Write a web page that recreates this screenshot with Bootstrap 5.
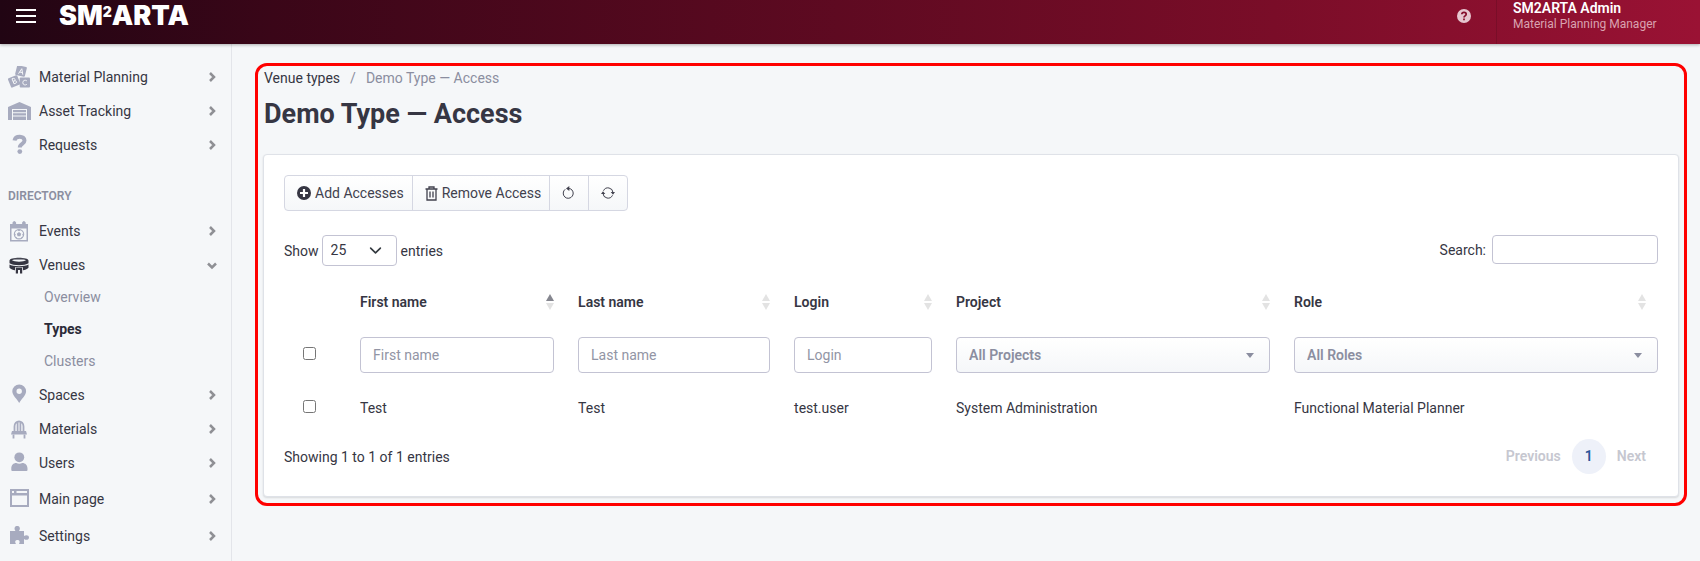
<!DOCTYPE html>
<html lang="en">
<head>
<meta charset="utf-8">
<meta name="viewport" content="width=device-width, initial-scale=1">
<title>Demo Type — Access</title>
<link href="https://cdn.jsdelivr.net/npm/bootstrap@5.3.0/dist/css/bootstrap.min.css" rel="stylesheet">
<style>
:root { --ink: #363643; --muted-ink: #8b8ea0; --icon: #a7abbf; --line: #c3c3d3; }
body { font-family: Roboto, "Noto Sans", sans-serif; font-size: 14px; line-height: 20px; color: var(--ink); background: #f5f7f9; }
a { color: inherit; text-decoration: none; }
.topbar { background: linear-gradient(90deg, #210513 0%, #3a0618 16%, #7a0d28 75%, #9a1234 100%); color: #fff; padding: 0 42px 12px 16px; height: 44px; box-shadow: 0 1px 3px rgba(0,0,0,.3); position: relative; }
.burger { width: 20px; height: 14px; border: 0; padding: 0; background: none; border-top: 2px solid #fff; border-bottom: 2px solid #fff; display: flex; align-items: center; }
.burger span { height: 2px; width: 100%; background: #fff; }
.logo { font: 900 27px/32px Inter, sans-serif; color: #fff; margin-left: 23px; display: flex; }
.logo span { font-size: 14px; line-height: 24px; }
.help { margin-right: 25px; color: #e6c6cf; border: 0; padding: 0; background: none; display: flex; }
.who { border-left: 1px solid rgba(0,0,0,.12); padding-left: 16px; width: 162px; height: 44px; margin-bottom: -12px; line-height: 16px; }
.who b { font-weight: 600; }
.who small { font-size: 12px; color: #d9a3b0; white-space: nowrap; }
.sidebar { width: 232px; border-right: 1px solid #e3e5ea; padding-top: 16px; min-height: calc(100vh - 44px); }
.side-link { height: 34px; padding: 0 14px 0 8px; }
.side-link.tall { height: 37px; }
.side-link .glyph { width: 24px; height: 22px; margin-right: 7px; color: var(--icon); }
.side-link .chev { margin-left: auto; color: #8f9095; }
.side-head { font-size: 12px; font-weight: 600; color: var(--muted-ink); padding-left: 8px; margin: 21px 0 5px; line-height: 26px; }
.side-subs { margin: -1px 0 1px; }
.side-sub { height: 32px; padding-left: 44px; color: var(--muted-ink); line-height: 32px; display: block; }
.side-sub.current { color: #2b2b38; font-weight: 700; }
.frame { border: 3px solid red; border-radius: 12px; margin: 19px 13px 0 23px; padding: 2px 5px 6px; }
.crumbs { margin: 0 0 0 1px; --bs-breadcrumb-item-padding-x: 10px; --bs-breadcrumb-divider-color: #8b8ea0; --bs-breadcrumb-item-active-color: #8b8ea0; }
h1 { font-size: 27px; line-height: 34px; font-weight: 700; margin: 9px 0 23px 1px; color: var(--ink); }
.panel { background: #fff; border: 1px solid #dfe2e8; border-radius: 4px; padding: 20px 20px 22px; box-shadow: 0 1px 2px rgba(0,0,0,.12); }
.tool { height: 36px; font-size: 14px; color: #41414e; border: 1px solid #d5d7e2; background: linear-gradient(#fff, #f5f7f9); padding: 0 12px; border-radius: 4px; gap: 4px; }
.tool-text { padding-right: 8px; }
.box { border: 1px solid var(--line); border-radius: 4px; background-color: #fff; color: var(--ink); font-size: 14px; }
.len { width: 75px; height: 31px; padding: 0 8px; margin: 0 4px 0 3px; background-position: right 14px center; background-size: 13px; }
.find { width: 166px; height: 29px; margin-left: 6px; padding: 0 8px; }
.grid-table { table-layout: fixed; width: 100%; }
.grid-table th, .grid-table td { padding: 12px 12px 13px; vertical-align: middle; font-size: 14px; }
.grid-table th { font-weight: 600; padding-top: 10px; }
.grid-table td:last-child { padding-right: 0; }
.grid-table .box { width: 100%; height: 36px; padding: 0 12px; display: block; }
.grid-table .box::placeholder { color: #9295a5; }
.grid-table .pick { font-weight: 600; color: var(--muted-ink); appearance: none; background: url("data:image/svg+xml,%3Csvg xmlns='http://www.w3.org/2000/svg' width='8' height='5'%3E%3Cpath d='M0 0h8L4 5z' fill='%238b8ea0'/%3E%3C/svg%3E") no-repeat right 15px center, linear-gradient(#fff, #f5f7f9); }
.tick { width: 13px; height: 13px; display: block; margin: 0 0 4px 7px; }
.sorter { color: #e3e3e3; }
.pager { --bs-pagination-border-width: 0; --bs-pagination-font-size: 14px; --bs-pagination-disabled-color: #c6c7d0; --bs-pagination-disabled-bg: #fff; font-weight: 600; }
.pager .page-link { line-height: 35px; padding: 0 12px; }
.pager .active .page-link { background: #eef1f9; color: #2b579a; border-radius: 50%; padding: 0 13px; }
</style>
</head>
<body>
<svg class="d-none">
  <symbol id="chev" viewBox="0 0 10 10"><path d="M3 1 7 5 3 9" fill="none" stroke="currentColor" stroke-width="2.500"/></symbol>
  <symbol id="sort" viewBox="0 0 8 16"><path d="M4 0 8 7H0z" fill="var(--up, currentColor)"/><path d="M0 9h8l-4 7z" fill="currentColor"/></symbol>
</svg>
<header class="topbar d-flex align-items-center">
  <button class="burger" type="button" aria-label="Menu"><span></span></button>
  <a class="logo" href="#">SM<span>2</span>ARTA</a>
  <button class="help ms-auto" type="button" aria-label="Help"><svg width="14" height="14" viewBox="0 0 14 14"><circle cx="7" cy="7" r="7" fill="currentColor"/><path d="M4.800 5.300C5 2.700 9.200 2.900 9.200 5.300 9.200 6.800 7 6.900 7 8.400M7 9.500v1.800" fill="none" stroke="#850e2b" stroke-width="1.700"/></svg></button>
  <div class="who d-flex flex-column"><b>SM2ARTA Admin</b><small>Material Planning Manager</small></div>
</header>
<div class="d-flex">
  <nav class="sidebar flex-shrink-0">
    <a class="side-link d-flex align-items-center" href="#"><svg class="glyph" viewBox="0 0 24 22"><g fill="currentColor"><rect x="8" y="0" width="10" height="10" rx="1" transform="rotate(14 13 5)"/><rect x="1" y="10.500" width="10" height="10" rx="1" transform="rotate(-22 6 15)"/><rect x="11.700" y="11.500" width="10.300" height="10" rx="1"/></g><g fill="none" stroke="#f5f7f9" stroke-width="1"><path d="m10.500 7.700 3.300-5 1 6M11.700 6l3 .7M4 12.800l2 5 2-.8c1.800-1-.1-2.700-1.500-2 1-.8.500-2.800-.9-2.600zM5 15.400l1.500-.5M18.800 14.800c-1.700-1.200-4-.4-4 1.800s2.300 3 4 1.800"/></g></svg>Material Planning<svg class="chev" width="10" height="10"><use href="#chev"/></svg></a>
    <a class="side-link d-flex align-items-center" href="#"><svg class="glyph" viewBox="0 0 24 22"><path fill="currentColor" d="M0 20V7L11.500 2 23 7v13h-4V9H4v11zM5 10h13v2.200H5zm0 3.200h13v2.200H5zm0 3.200h13V20H5z"/></svg>Asset Tracking<svg class="chev" width="10" height="10"><use href="#chev"/></svg></a>
    <a class="side-link d-flex align-items-center" href="#"><svg class="glyph" viewBox="0 0 24 22"><path d="M6.500 6.500C7.500 1.200 16.500 1.600 16.500 6.500c0 3.800-4.700 3-4.700 7" fill="none" stroke="currentColor" stroke-width="4"/><circle cx="11.800" cy="17.600" r="2.400" fill="currentColor"/></svg>Requests<svg class="chev" width="10" height="10"><use href="#chev"/></svg></a>
    <h2 class="side-head">DIRECTORY</h2>
    <a class="side-link d-flex align-items-center" href="#"><svg class="glyph" viewBox="0 0 24 22"><path fill="currentColor" fill-rule="evenodd" d="M2 4h2.500V2.500q1.800-3 3.600 0V4h6V2.500q1.800-3 3.600 0V4H20v17.500H2zm1.500 4.500V20h15V8.500z"/><circle cx="11" cy="14.200" r="4.700" fill="none" stroke="currentColor" stroke-width="1.100"/><path fill="currentColor" d="m11 12 2.200 1.700-.8 2.500H9.600l-.8-2.500zM8.800 9.800h4.400L11 11.300zm-2.500 3.500 1.500 1-1 2.200zm9.400 0-1.500 1 1 2.200zM8.500 17l1.200 1.800-2-.7zm5 0-1.200 1.800 2-.7z"/></svg>Events<svg class="chev" width="10" height="10"><use href="#chev"/></svg></a>
    <a class="side-link d-flex align-items-center" href="#"><svg class="glyph" viewBox="0 0 24 22"><g fill="#363643"><path fill-rule="evenodd" d="M1.500 6.500C1.500 2.700 20.500 2.700 20.500 6.500v2.800c-3 2.500-16 2.500-19 0zM4 6.200c2 1.900 12 1.900 14 0-2-1.400-12-1.400-14 0z"/><path d="M1.500 10.500c3 2.200 16 2.200 19 0v3.300c-1.500 1.600-3.500 2.200-5.500 2.500v-3H7v3c-2-.3-4-.9-5.500-2.500zM7.800 13.800h6.400v5.700h-2.200V16h-2v3.500H7.800z"/></g><path d="M6.500 5.300h9" stroke="#8d8e98"/></svg>Venues<svg class="chev" width="10" height="10" viewBox="0 0 10 10"><path d="M1 3.500l4 4 4-4" fill="none" stroke="currentColor" stroke-width="2.500"/></svg></a>
    <div class="side-subs">
      <a class="side-sub" href="#">Overview</a>
      <a class="side-sub current" href="#">Types</a>
      <a class="side-sub" href="#">Clusters</a>
    </div>
    <a class="side-link d-flex align-items-center" href="#"><svg class="glyph" viewBox="0 0 24 22"><path fill="currentColor" fill-rule="evenodd" d="M11.200 19C9 15 4.300 11.500 4.300 7.300a6.900 6.900 0 0 1 13.800 0C18.100 11.500 13.400 15 11.200 19zm0-14.500a2.700 2.700 0 1 0 0 5.400 2.700 2.700 0 0 0 0-5.400z"/></svg>Spaces<svg class="chev" width="10" height="10"><use href="#chev"/></svg></a>
    <a class="side-link d-flex align-items-center" href="#"><svg class="glyph" viewBox="0 0 24 22"><path d="M6.500 13.500V8.500c0-6.700 9-6.700 9 0v5M9.600 13.500V4.500M12.400 13.500V4.500M5.500 20.500v-4M16.500 20.500v-4" fill="none" stroke="currentColor" stroke-width="1.800"/><path fill="currentColor" d="M4 13h14l1 3.500H3z"/></svg>Materials<svg class="chev" width="10" height="10"><use href="#chev"/></svg></a>
    <a class="side-link d-flex align-items-center" href="#"><svg class="glyph" viewBox="0 0 24 22"><circle cx="11.300" cy="5.300" r="4.900" fill="currentColor"/><path fill="currentColor" d="M3.300 18v-1.500c0-3.300 2-5.500 5-5.500 2 1 4 1 6 0 3 0 5.200 2.200 5.200 5.500V18q0 1-1 1H4.300q-1 0-1-1z"/></svg>Users<svg class="chev" width="10" height="10"><use href="#chev"/></svg></a>
    <a class="side-link tall d-flex align-items-center" href="#"><svg class="glyph" viewBox="0 0 24 22"><path fill="currentColor" fill-rule="evenodd" d="M2 1h19v18H2zm2 6.500V17h15V7.500zM4 3v2h2V3zm4.500 0v2H19V3z"/></svg>Main page<svg class="chev" width="10" height="10"><use href="#chev"/></svg></a>
    <a class="side-link tall d-flex align-items-center" href="#"><svg class="glyph" viewBox="0 0 24 22"><path fill="currentColor" d="M2 6h5.500C5.500 3 7 1 9.200 1s3.800 2 1.800 5h5v5c2-1.500 5-1 5 1.500s-3 3-5 1.500v5h-5c1.500-3 .2-4-1.500-4s-3.300 1-1.500 4H2z"/></svg>Settings<svg class="chev" width="10" height="10"><use href="#chev"/></svg></a>
  </nav>
  <main class="flex-grow-1">
    <div class="frame">
      <ol class="breadcrumb crumbs"><li class="breadcrumb-item"><a href="#">Venue types</a></li><li class="breadcrumb-item active">Demo Type — Access</li></ol>
      <h1>Demo Type — Access</h1>
      <section class="panel">
        <div class="btn-group">
          <button class="btn tool tool-text d-flex align-items-center" type="button"><svg width="14" height="14" viewBox="0 0 14 14"><circle cx="7" cy="7" r="7" fill="#363643"/><path d="M7 3v8M3 7h8" stroke="#fff" stroke-width="2.200"/></svg>Add Accesses</button>
          <button class="btn tool tool-text d-flex align-items-center" type="button"><svg width="13" height="15" viewBox="0 0 13 15" fill="none" stroke="#41414e" stroke-width="1.300"><path d="M.5 3h12M4 3V1h5v2M2 3v11h9V3M5 5.500v6M8 5.500v6"/></svg>Remove Access</button>
          <button class="btn tool d-flex align-items-center" type="button" aria-label="Reset"><svg width="14" height="14" viewBox="0 0 14 14"><path d="M3.200 3.300a5 5 0 1 0 5-.6H5.500" fill="none" stroke="#41414e"/><path d="M7.300 0v5L4 2.500z" fill="#41414e"/></svg></button>
          <button class="btn tool d-flex align-items-center" type="button" aria-label="Refresh"><svg width="14" height="14" viewBox="0 0 14 14"><path d="M2.500 4.700a5 5 0 0 1 9.500 2M11.500 9.300a5 5 0 0 1-9.500-2" fill="none" stroke="#41414e"/><path d="M9.700 6H14l-2 2.800zM0 8h4.300L2 5.200z" fill="#41414e"/></svg></button>
        </div>
        <div class="d-flex justify-content-between align-items-start mt-4">
          <div class="d-flex align-items-center"><label for="len">Show</label><select id="len" class="form-select box len"><option>25</option></select><label for="len">entries</label></div>
          <div class="d-flex align-items-center"><label for="find">Search:</label><input id="find" type="search" class="box find"></div>
        </div>
        <table class="grid-table mt-3 mb-2">
          <colgroup><col style="width:4.660%"><col style="width:15.870%"><col style="width:15.720%"><col style="width:11.790%"><col style="width:24.600%"><col></colgroup>
          <thead>
            <tr>
              <th></th>
              <th><div class="d-flex justify-content-between align-items-center">First name<svg class="sorter" style="--up:#85868f" width="8" height="16"><use href="#sort"/></svg></div></th>
              <th><div class="d-flex justify-content-between align-items-center">Last name<svg class="sorter" width="8" height="16"><use href="#sort"/></svg></div></th>
              <th><div class="d-flex justify-content-between align-items-center">Login<svg class="sorter" width="8" height="16"><use href="#sort"/></svg></div></th>
              <th><div class="d-flex justify-content-between align-items-center">Project<svg class="sorter" width="8" height="16"><use href="#sort"/></svg></div></th>
              <th><div class="d-flex justify-content-between align-items-center">Role<svg class="sorter" width="8" height="16"><use href="#sort"/></svg></div></th>
            </tr>
          </thead>
          <tbody>
            <tr>
              <td><input class="tick" type="checkbox" aria-label="Select all"></td>
              <td><input class="box" type="text" placeholder="First name" aria-label="First name"></td>
              <td><input class="box" type="text" placeholder="Last name" aria-label="Last name"></td>
              <td><input class="box" type="text" placeholder="Login" aria-label="Login"></td>
              <td><select class="box pick" aria-label="Project"><option>All Projects</option></select></td>
              <td><select class="box pick" aria-label="Role"><option>All Roles</option></select></td>
            </tr>
            <tr>
              <td><input class="tick" type="checkbox" aria-label="Select Test"></td>
              <td>Test</td><td>Test</td><td>test.user</td><td>System Administration</td><td>Functional Material Planner</td>
            </tr>
          </tbody>
        </table>
        <div class="d-flex justify-content-between align-items-center">
          <span>Showing 1 to 1 of 1 entries</span>
          <ul class="pagination pager mb-0"><li class="page-item disabled"><a class="page-link" href="#">Previous</a></li><li class="page-item active"><a class="page-link" href="#">1</a></li><li class="page-item disabled"><a class="page-link" href="#">Next</a></li></ul>
        </div>
      </section>
    </div>
  </main>
</div>
<script src="https://cdn.jsdelivr.net/npm/bootstrap@5.3.0/dist/js/bootstrap.bundle.min.js"></script>
</body>
</html>
